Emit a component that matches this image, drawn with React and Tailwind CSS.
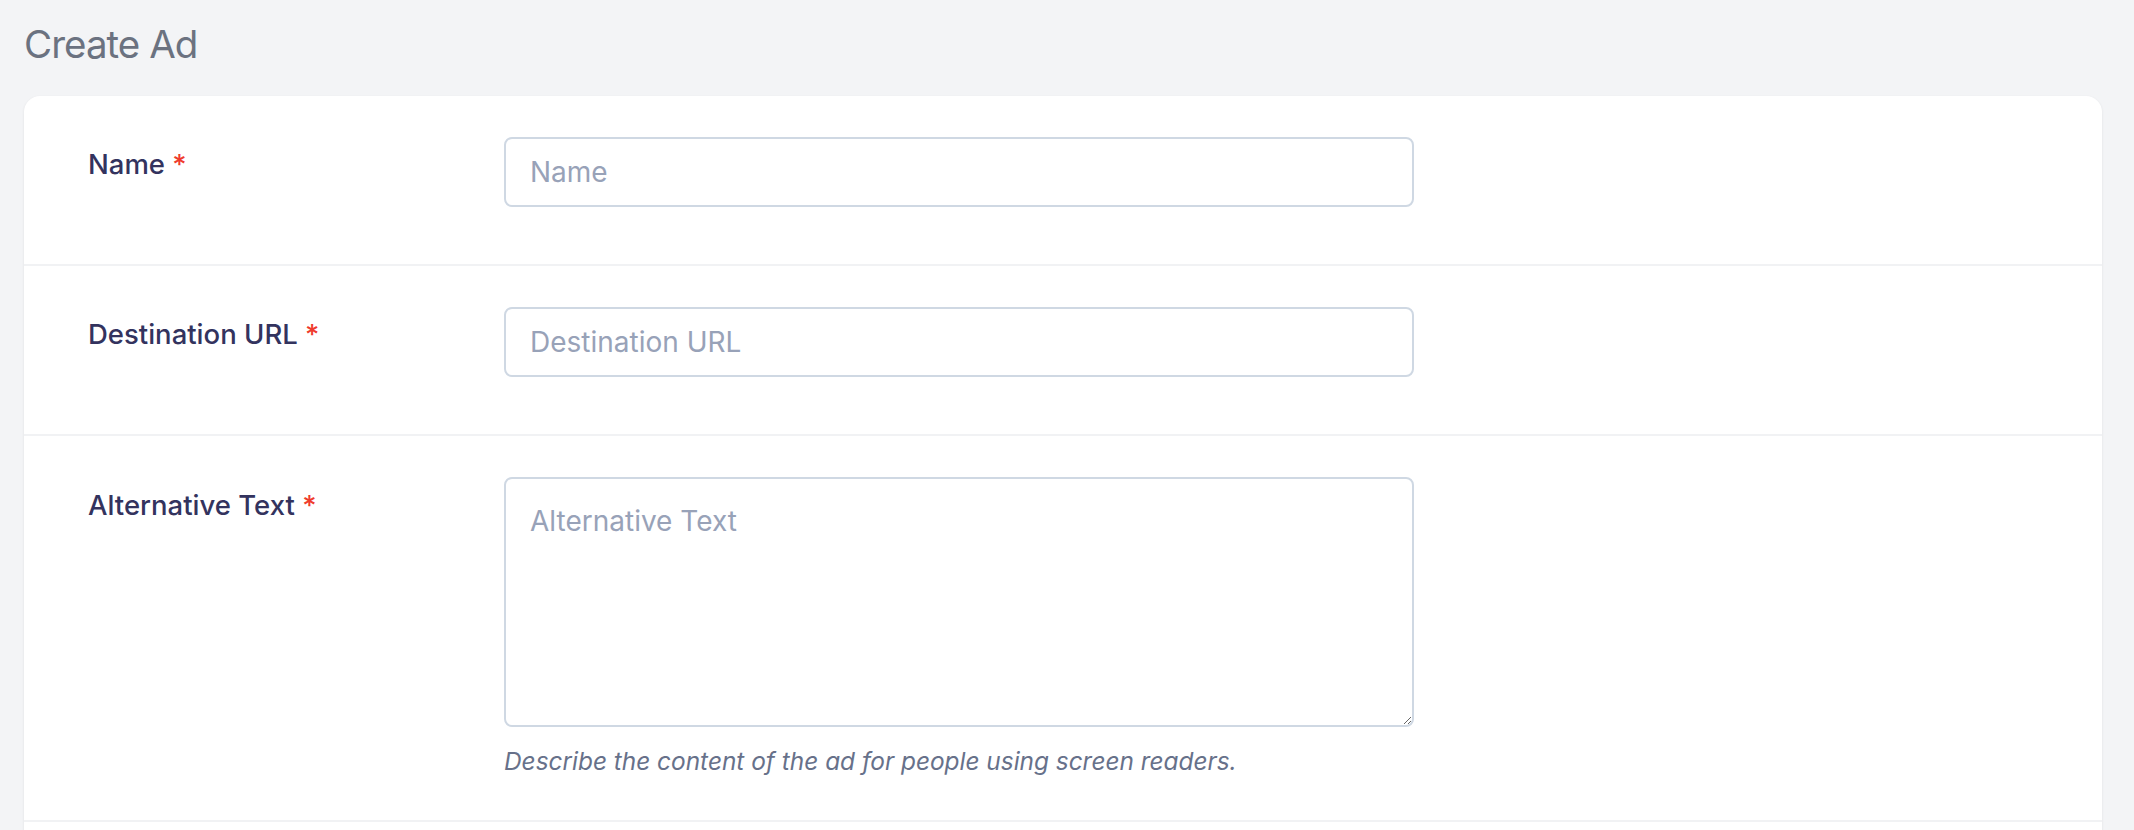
export default function App() {
  const fields = [
    { label: "Name", placeholder: "Name" },
    { label: "Destination URL", placeholder: "Destination URL" },
  ];

  return (
    <div className="h-[830px] overflow-hidden bg-[#f3f4f6] pl-[24px] pr-[32px] pt-[20px] font-['Inter',sans-serif]">
      <h1 className="mb-[28px] text-[38.5px] leading-[48px] font-normal tracking-tight text-[#6b7280]">
        Create Ad
      </h1>

      <div className="rounded-2xl bg-white shadow-[0_1px_3px_rgba(0,0,0,0.08)]">
        {fields.map((f, i) => (
          <div
            key={f.label}
            className={
              i === 0
                ? "flex px-[64px] pt-[41px] pb-[57px]"
                : "flex border-t-2 border-[#f1f2f4] px-[64px] pt-[41px] pb-[57px]"
            }
          >
            <label className="mt-[7px] w-[416px] shrink-0 text-[27.5px] leading-[40px] font-medium text-[#33335e]">
              {f.label} <span className="text-[#ef3b2d]">*</span>
            </label>
            <input
              type="text"
              placeholder={f.placeholder}
              className="h-[70px] w-[910px] rounded-lg border-2 border-[#cfd8e3] bg-white px-[24px] text-[28px] leading-[40px] text-[#33335e] placeholder:text-[#98a2b8] outline-none"
            />
          </div>
        ))}

        <div className="flex border-t-2 border-[#f1f2f4] px-[64px] pt-[41px] pb-[43px]">
          <label className="mt-[8px] w-[416px] shrink-0 text-[27.5px] leading-[40px] font-medium text-[#33335e]">
            Alternative Text <span className="text-[#ef3b2d]">*</span>
          </label>
          <div className="w-[910px]">
            <textarea
              placeholder="Alternative Text"
              className="block h-[250px] w-full rounded-lg border-2 border-[#cfd8e3] bg-white px-[24px] py-[22px] text-[28px] leading-[40px] text-[#33335e] placeholder:text-[#98a2b8] outline-none"
            />
            <p className="mt-[18px] text-[24.4px] leading-[32px] italic text-[#67718a]">
              Describe the content of the ad for people using screen readers.
            </p>
          </div>
        </div>

        <div className="h-[120px] border-t-2 border-[#f1f2f4]" />
      </div>
    </div>
  );
}
